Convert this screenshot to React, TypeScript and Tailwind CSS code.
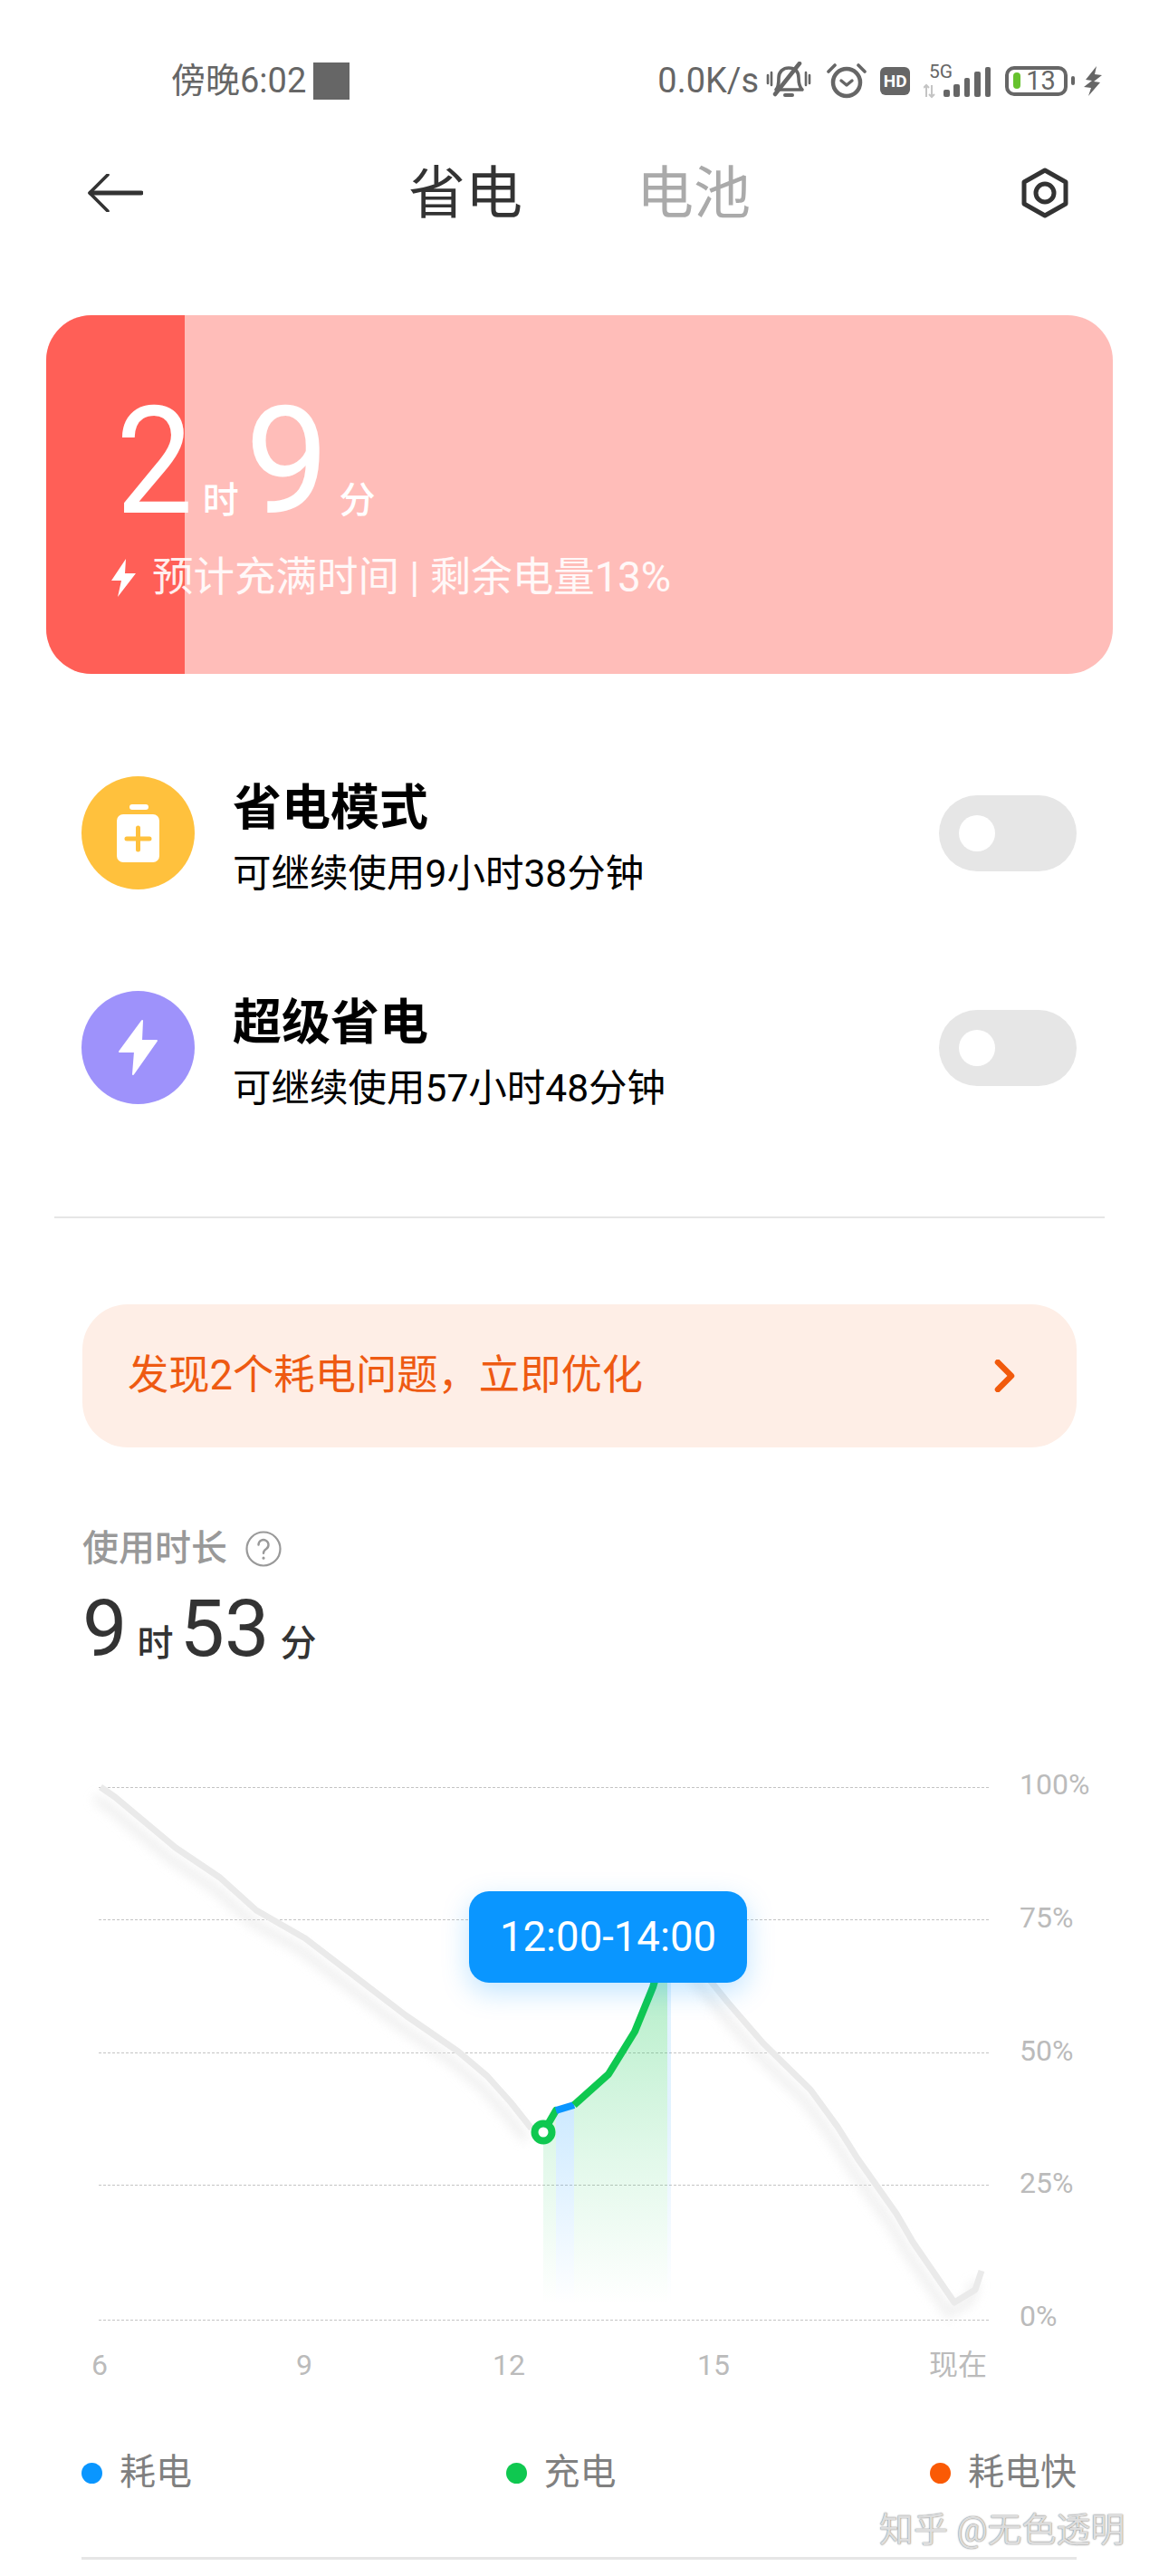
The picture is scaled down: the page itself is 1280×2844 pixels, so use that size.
import React from "react";

function BellOff() {
  return (
    <svg width="50" height="42" viewBox="0 0 50 42" fill="none" stroke="#666" strokeWidth="3.6" strokeLinecap="round" strokeLinejoin="round">
      <path d="M11 31c3-3 3-7 3-13 0-7 5-11 11-11 7 0 11 4 11 11 0 6 1 10 4 13z" />
      <path d="M21 37h8" strokeWidth="4" />
      <path d="M10 36 37 2" strokeWidth="4.5" stroke="#666" />
      <path d="M2 15v9M6 12v14M44 12v14M48 15v9" strokeWidth="2.6" />
    </svg>
  );
}

function AlarmIcon() {
  return (
    <svg width="44" height="40" viewBox="0 0 44 40" fill="none" stroke="#666" strokeLinecap="round" strokeLinejoin="round">
      <circle cx="22" cy="22" r="15" strokeWidth="4.5" />
      <path d="M16 20l6 5 6-5" strokeWidth="3.4" />
      <path d="M2 10 9 3M42 10 35 3" strokeWidth="3.6" />
    </svg>
  );
}

function SignalIcon() {
  return (
    <svg width="74" height="42" viewBox="0 -3 74 42" fill="#666">
      <text x="6" y="15" fontSize="21" fontFamily="Roboto, sans-serif" fill="#666">5G</text>
      <path d="M3 23v13M0 26l3-3 3 3M9 36V23M6 33l3 3 3-3" stroke="#c4c4c4" strokeWidth="2" fill="none" />
      <rect x="22" y="28" width="7" height="8" rx="2" />
      <rect x="33" y="22" width="7" height="14" rx="2" />
      <rect x="45" y="15" width="6" height="21" rx="2" />
      <rect x="56" y="8" width="7" height="28" rx="2" />
      <rect x="68" y="3" width="6" height="33" rx="2" />
    </svg>
  );
}

function StatusBar() {
  return (
    <div className="mt-[68px] flex h-[42px] items-center pl-[189px]">
      <span className="text-[38px] leading-none text-[#666]">傍晚6:02</span>
      <div className="ml-2 h-[41px] w-[40px] bg-[#666]" />
      <span className="ml-[340px] text-[38px] leading-none text-[#666]">0.0K/s</span>
      <div className="ml-[8px]">
        <BellOff />
      </div>
      <div className="ml-[17px]">
        <AlarmIcon />
      </div>
      <div className="ml-[15px] flex h-[31px] w-[33px] items-center justify-center rounded-[6px] bg-[#666] text-[19px] leading-none font-bold text-white">
        HD
      </div>
      <div className="ml-[15px]">
        <SignalIcon />
      </div>
      <div className="ml-[16px] flex h-[33px] w-[69px] items-center rounded-[10px] border-[4px] border-[#666] pl-[5px]">
        <div className="h-[18px] w-[8px] rounded-full bg-[#66C22E]" />
        <span className="ml-[6px] text-[29px] leading-none text-[#666]">13</span>
      </div>
      <div className="ml-[4px] h-[10px] w-[4px] rounded-full bg-[#666]" />
      <svg className="ml-[10px]" width="20" height="33" viewBox="0 0 20 33" fill="#666">
        <path d="M14 0 2 15l7 1-9 7 8 1-3 9 13-15-7-1 9-7-8-1z" />
      </svg>
    </div>
  );
}

function Header() {
  return (
    <div className="mt-[73px] flex h-[60px] items-center pl-[96px]">
      <svg width="62" height="42" viewBox="0 0 62 42" fill="none" stroke="#333" strokeLinecap="round" strokeLinejoin="round">
        <path d="M4 21h56" strokeWidth="5" />
        <path d="M23 1 3 21l20 20" strokeWidth="3.6" />
      </svg>
      <span className="ml-[293px] text-[63px] leading-none text-[#333]">省电</span>
      <span className="ml-[126px] text-[63px] leading-none text-[#aaa]">电池</span>
      <svg className="ml-[299px]" width="52" height="56" viewBox="0 0 52 56" fill="none" stroke="#333" strokeWidth="5" strokeLinejoin="round">
        <path d="M26 3 49 16v24L26 53 3 40V16z" />
        <circle cx="26" cy="28" r="10" />
      </svg>
    </div>
  );
}

function ChargeCard() {
  return (
    <div className="relative mx-[51px] mt-[105px] h-[396px] overflow-hidden rounded-[50px] bg-[#FFBDB9] pt-[79px] pl-[77px] text-white">
      <div className="absolute inset-y-0 left-0 w-[153px] bg-[#FF5F57]" />
      <div className="relative flex items-baseline leading-none">
        <span className="origin-left scale-x-[0.92] text-[165px]">2</span>
        <span className="ml-[3px] text-[40px] font-medium">时</span>
        <span className="ml-[7px] text-[165px]">9</span>
        <span className="ml-[11px] text-[40px] font-medium">分</span>
      </div>
      <div className="relative mt-[23px] -ml-[5px] flex items-center">
        <svg width="27" height="42" viewBox="0 0 27 42" fill="#fff">
          <path d="M16 0 0 24h11L7 42l20-26H15z" />
        </svg>
        <span className="ml-[18px] text-[45.5px] leading-none whitespace-pre text-white/90">预计充满时间 | 剩余电量13%</span>
      </div>
    </div>
  );
}

function Toggle() {
  return (
    <div className="mr-[91px] ml-auto flex h-[84px] w-[152px] items-center self-center rounded-full bg-[#E6E6E6] pl-[22px]">
      <div className="h-[40px] w-[40px] rounded-full bg-white" />
    </div>
  );
}

function ModeRow({ icon, color, title, sub, className }: { icon: React.ReactNode; color: string; title: string; sub: string; className: string }) {
  return (
    <div className={`flex h-[125px] items-start pl-[90px] ${className}`}>
      <div className={`flex h-[125px] w-[125px] items-center justify-center rounded-full ${color}`}>{icon}</div>
      <div className="mt-[9px] ml-[42px] flex flex-col text-black">
        <span className="text-[54px] leading-none font-bold">{title}</span>
        <span className="mt-[24px] text-[42.5px] leading-none">{sub}</span>
      </div>
      <Toggle />
    </div>
  );
}

function UsageChart() {
  const gray1 = "M111 1974 L127 1985 L194 2041 L243 2074 L283 2110 L337 2141 L448 2226 L506 2266 L538 2293 L564 2322 L587 2351";
  const gray2 = "M770 2170 L804 2212 L843 2257 L895 2308 L925 2349 L947 2384 L990 2445 L1008 2476 L1054 2543 L1077 2529 L1084 2508";
  return (
    <div className="relative mt-[112px] flex h-[619px]">
      <svg width="1110" height="619" viewBox="0 1955 1110 619" fill="none">
        <defs>
          <linearGradient id="greenFade" gradientUnits="userSpaceOnUse" x1="0" y1="2190" x2="0" y2="2545">
            <stop offset="0" stopColor="#0FC850" stopOpacity="0.3" />
            <stop offset="0.55" stopColor="#0FC850" stopOpacity="0.12" />
            <stop offset="1" stopColor="#0FC850" stopOpacity="0" />
          </linearGradient>
          <linearGradient id="blueFade" gradientUnits="userSpaceOnUse" x1="0" y1="2330" x2="0" y2="2545">
            <stop offset="0" stopColor="#0A96FF" stopOpacity="0.2" />
            <stop offset="0.5" stopColor="#0A96FF" stopOpacity="0.1" />
            <stop offset="1" stopColor="#0A96FF" stopOpacity="0" />
          </linearGradient>
          <filter id="soft" x="-10%" y="-10%" width="120%" height="120%">
            <feGaussianBlur stdDeviation="6" />
          </filter>
        </defs>
        {[1974.5, 2120.5, 2267.5, 2413.5, 2562.5].map((y) => (
          <line key={y} x1="109" x2="1092" y1={y} y2={y} stroke="#c4c4c4" strokeWidth="1" strokeDasharray="3 2" />
        ))}
        <g filter="url(#soft)" stroke="#e4e4e4" strokeWidth="10" opacity="0.6" transform="translate(-6 12)">
          <path d={gray1} />
          <path d={gray2} />
        </g>
        <path d="M600 2355 L614 2331 V2545 H600 Z" fill="url(#greenFade)" />
        <path d="M614 2331 L634 2325 V2545 H614 Z" fill="url(#blueFade)" />
        <path d="M634 2325 L672 2291 L701 2244 L721 2195 L725 2180 H737 V2545 H634 Z" fill="url(#greenFade)" />
        <rect x="737" y="2190" width="4" height="355" fill="url(#blueFade)" opacity="0.6" />
        <path d={gray1} stroke="#EAEAEA" strokeWidth="7" strokeLinejoin="round" />
        <path d={gray2} stroke="#EAEAEA" strokeWidth="7" strokeLinejoin="round" />
        <path d="M600 2355 L614 2331" stroke="#0FC850" strokeWidth="8" strokeLinecap="round" />
        <path d="M614 2331 L634 2325" stroke="#0A96FF" strokeWidth="8" />
        <path d="M634 2325 L672 2291 L701 2244 L721 2195 L727 2175" stroke="#0FC850" strokeWidth="8" strokeLinejoin="round" />
        <circle cx="600" cy="2355" r="9.5" fill="#fff" stroke="#0FC850" strokeWidth="8" />
      </svg>
      <div className="ml-[16px] flex h-[619px] flex-col justify-between text-[32px] leading-none text-[#bbb]">
        <span>100%</span>
        <span>75%</span>
        <span>50%</span>
        <span>25%</span>
        <span>0%</span>
      </div>
      <div className="absolute top-[134px] left-[518px] flex h-[101px] w-[307px] items-center justify-center rounded-[22px] bg-[#0A96FF] text-[45.5px] leading-none text-white shadow-[0_10px_30px_rgba(10,150,255,0.25)]">
        12:00-14:00
      </div>
    </div>
  );
}

function LegendItem({ dot, label }: { dot: string; label: string }) {
  return (
    <div className="flex items-center">
      <div className={`h-[23px] w-[23px] rounded-full ${dot}`} />
      <span className="ml-[19px] text-[40px] leading-none text-[#808080]">{label}</span>
    </div>
  );
}

export default function App() {
  return (
    <div className="relative h-[2844px] w-[1280px] overflow-hidden bg-white [font-family:Roboto,'Noto_Sans_CJK_SC',sans-serif]">
      <StatusBar />
      <Header />
      <ChargeCard />

      <ModeRow
        className="mt-[113px]"
        color="bg-[#FFC13D]"
        title="省电模式"
        sub="可继续使用9小时38分钟"
        icon={
          <svg width="47" height="64" viewBox="0 0 47 64" fill="#fff">
            <rect x="14" y="0" width="21" height="6" rx="3" />
            <rect x="0" y="11" width="47" height="53" rx="7" />
            <path d="M23.5 26v24M11 38h25" stroke="#FFC13D" strokeWidth="5" strokeLinecap="round" />
          </svg>
        }
      />
      <ModeRow
        className="mt-[112px]"
        color="bg-[#9E92FB]"
        title="超级省电"
        sub="可继续使用57小时48分钟"
        icon={
          <svg width="45" height="63" viewBox="0 0 45 63" fill="#fff" stroke="#fff" strokeWidth="2" strokeLinejoin="round">
            <path d="M27 2 2 36h17l-2 25 26-37H26z" />
          </svg>
        }
      />

      <div className="mx-[60px] mt-[124px] h-[2px] bg-[#E6E6E6]" />

      <div className="mx-[91px] mt-[95px] flex h-[158px] items-center justify-between rounded-[50px] bg-[#FEEEE6] pr-[67px] pl-[50px] text-[45.3px] leading-none text-[#EE5A12]">
        <span>{"发现2个耗电问题\uFF0C立即优化"}</span>
        <svg width="25" height="36" viewBox="0 0 25 36" fill="none" stroke="#F15A0C" strokeWidth="6.5" strokeLinecap="round" strokeLinejoin="round">
          <path d="M5 3l15 15L5 33" />
        </svg>
      </div>

      <div className="mt-[92px] flex items-center pl-[91px] text-[40px] leading-none font-medium text-[#999]">
        <span>使用时长</span>
        <svg className="ml-[20px]" width="40" height="40" viewBox="0 0 40 40" fill="none" stroke="#999" strokeLinecap="round">
          <circle cx="20" cy="20" r="18.5" strokeWidth="2.2" />
          <path d="M14.5 15.5a5.5 5.5 0 1 1 8.6 4.6c-2 1.4-3.1 2.4-3.1 4.6" strokeWidth="2.4" />
          <path d="M20 30v.2" strokeWidth="3" />
        </svg>
      </div>

      <div className="mt-[24px] flex items-baseline pl-[91px] leading-none text-[#333]">
        <span className="text-[88px]">9</span>
        <span className="ml-[11px] text-[40px] font-medium">时</span>
        <span className="ml-[7px] text-[88px]">53</span>
        <span className="ml-[12px] text-[40px] font-medium">分</span>
      </div>

      <UsageChart />

      <div className="mt-[22px] flex pl-[101px] text-[32px] leading-none text-[#bbb]">
        <span>6</span>
        <span className="ml-[208px]">9</span>
        <span className="ml-[199px]">12</span>
        <span className="ml-[190px]">15</span>
        <span className="ml-[220px]">现在</span>
      </div>

      <div className="mt-[83px] ml-[90px] flex w-[1099px] justify-between">
        <LegendItem dot="bg-[#0A96FF]" label="耗电" />
        <LegendItem dot="bg-[#0FC850]" label="充电" />
        <LegendItem dot="bg-[#FA5A05]" label="耗电快" />
      </div>

      <div className="mt-[73px] ml-[90px] h-[3px] w-[1099px] bg-[#E6E6E6]" />

      <span className="absolute top-[2774px] left-[971px] text-[38px] leading-none whitespace-pre text-[#dddddd] [text-shadow:0_0_1.5px_#555]">
        知乎 @无色透明
      </span>
    </div>
  );
}
